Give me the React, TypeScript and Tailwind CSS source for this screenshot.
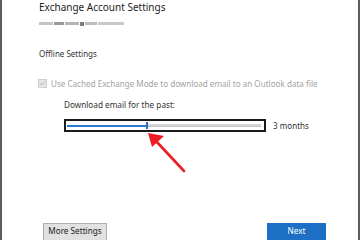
import { Check } from "lucide-react";

export default function App() {
    return (
        <div className="relative w-[360px] h-[240px] overflow-hidden bg-white border-x-2 border-[#5c5c5c] font-['Noto_Sans',sans-serif]">
            <div className="flex flex-col pl-[37px] pr-[30px] h-full">
                <h1 className="text-[10px] leading-[14px] text-[#222]">Exchange Account Settings</h1>
                <div className="flex items-center gap-[1px] mt-[8px] h-[3px] blur-[0.6px]">
                    <div className="w-[14px] h-[3px] bg-[#c4c4c4]" />
                    <div className="w-[10px] h-[3px] bg-[#9a9a9a]" />
                    <div className="w-[14px] h-[3px] bg-[#b5b5b5]" />
                    <div className="w-[4px] h-[4px] bg-[#7d7d7d]" />
                    <div className="w-[12px] h-[3px] bg-[#bdbdbd]" />
                    <div className="w-[26px] h-[3px] bg-[#c8c8c8]" />
                </div>
                <div className="text-[8px] leading-[11px] text-[#333] mt-[23px]">Offline Settings</div>

                <div className="flex items-center gap-[4px] mt-[19px] ml-[-1px] h-[10px]">
                    <span className="w-[9px] h-[9px] border border-[#cfcfcf] bg-[#e6e6e6] flex items-center justify-center">
                        <Check size={7} strokeWidth={3} className="text-[#ababab]" />
                    </span>
                    <span className="text-[8.1px] leading-[11px] text-[#a3a3a3] whitespace-nowrap">Use Cached Exchange Mode to download email to an Outlook data file</span>
                </div>

                <div className="pl-[25px] mt-[11px]">
                    <div className="text-[8.2px] leading-[11px] text-[#333]">Download email for the past:</div>
                    <div className="flex items-center gap-[7px] mt-[9px]">
                        <div className="w-[202px] h-[13px] border-2 border-[#1a1a1a] bg-white flex items-center px-[1px]">
                            <div className="flex-1 h-[7px] flex items-center pr-[2px]">
                                <div className="w-[79px] h-[2px] bg-[#2b7bd2]" />
                                <div className="w-[2px] h-[7px] bg-[#2b6fc0]" />
                                <div className="flex-1 h-[3px] bg-[#d6d6d6] border-b border-[#c4c4c4]" />
                            </div>
                        </div>
                        <span className="text-[8.1px] leading-[11px] text-[#333]">3 months</span>
                    </div>
                </div>

                <div className="flex justify-between items-start mt-auto pl-[4px] pr-[2px]">
                    <button className="w-[64px] h-[22px] mb-[-5px] border border-[#adadad] bg-[#e1e1e1] text-[8.2px] text-[#222] pb-[5px]">More Settings</button>
                    <button className="w-[59px] h-[22px] mb-[-5px] bg-[#1c6fc5] text-[8.2px] text-white pb-[5px]">Next</button>
                </div>
            </div>

            <svg className="absolute left-[140px] top-[128px]" width="50" height="50" viewBox="0 0 50 50">
                <line x1="42" y1="43" x2="13" y2="12" stroke="#ee1c24" strokeWidth="2.6" strokeLinecap="round" />
                <polygon points="6,5 22,8 10,19" fill="#ee1c24" />
            </svg>
        </div>
    );
}
